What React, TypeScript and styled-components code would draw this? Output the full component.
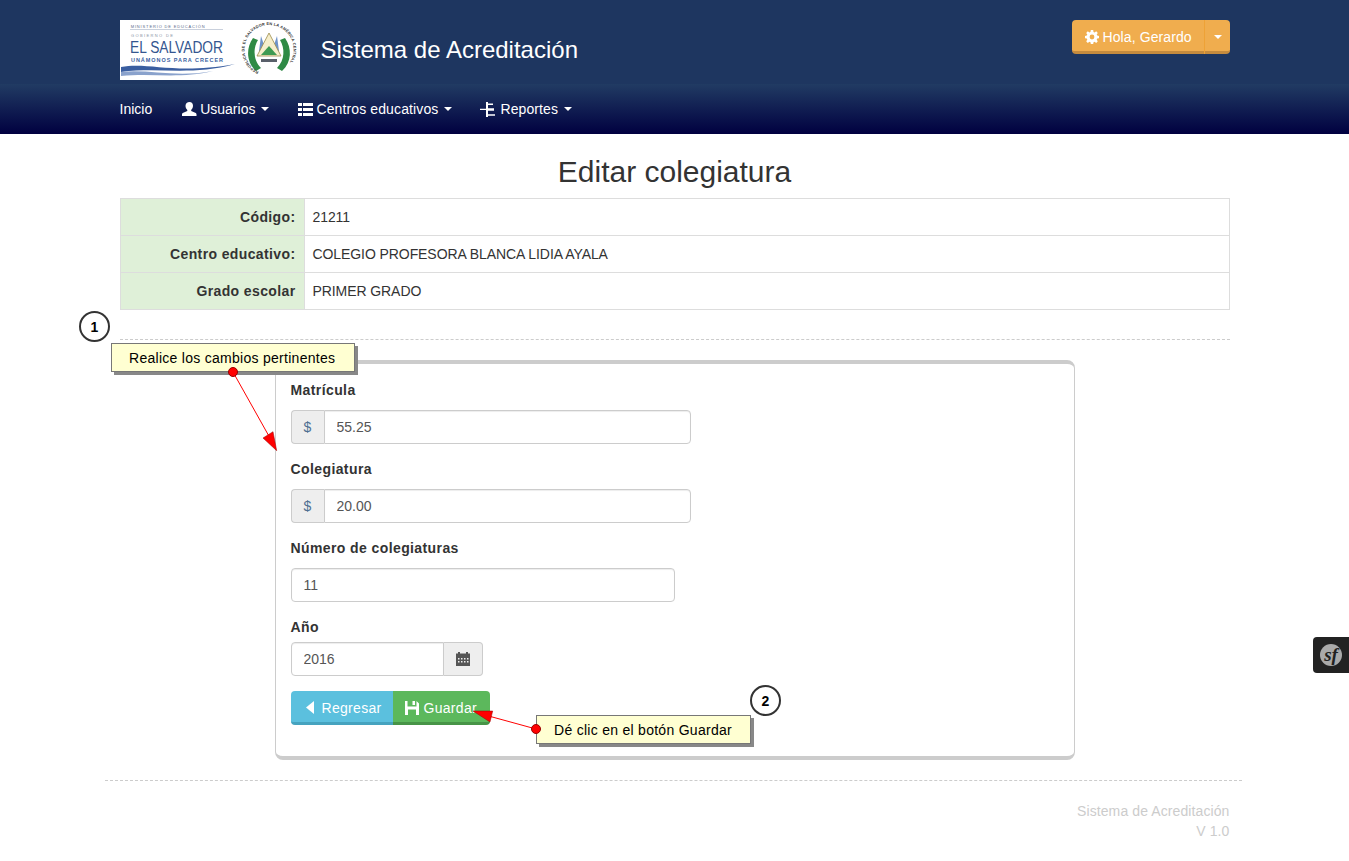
import React from 'react';
import styled, { createGlobalStyle } from 'styled-components';

const Global = createGlobalStyle`
  html, body { margin: 0; padding: 0; background: #fff; }
  body {
    font-family: "Liberation Sans", Arial, sans-serif;
    font-size: 14px;
    line-height: 20px;
    color: #333;
  }
  * { box-sizing: border-box; }
`;

const Page = styled.div`
  position: relative;
  width: 1349px;
  height: 861px;
  overflow: hidden;
`;

const Container = styled.div`
  width: 1140px;
  margin: 0 auto;
  padding: 0 15px;
  display: flex;
  align-items: center;
`;

const Top = styled.header`
  height: 84px;
  background: #1e3660;
`;

const TopRow = styled(Container)`
  height: 84px;
  padding-bottom: 8px;
  padding-top: 4px;
  justify-content: space-between;
  align-items: flex-start;
`;

const Brand = styled.div`
  display: flex;
  align-items: center;
  gap: 21px;
  padding-top: 16px;
`;

const Logo = styled.svg`
  display: block;
  width: 180px;
  height: 60px;
`;

const BrandName = styled.div`
  font-size: 24px;
  line-height: 60px;
  color: #fff;
`;

const UserGroup = styled.div`
  display: flex;
  margin-top: 16px;
  height: 34px;
  border-radius: 4px;
  background: #f0ad4e;
  border-bottom: 3px solid #c58b3e;
  color: #fff;
`;

const UserMain = styled.div`
  display: flex;
  align-items: center;
  gap: 4px;
  width: 133px;
  padding-left: 13px;
  letter-spacing: 0.1px;
  border-right: 1px solid #eea236;
  margin-bottom: -3px;
`;

const UserCaret = styled.div`
  width: 25px;
  padding-top: 3px;
  display: flex;
  align-items: center;
  justify-content: center;
`;

const Caret = styled.span`
  display: inline-block;
  width: 0;
  height: 0;
  margin-left: 2px;
  vertical-align: middle;
  border-top: 4px solid currentColor;
  border-left: 4px solid transparent;
  border-right: 4px solid transparent;
`;

const Nav = styled.nav`
  height: 50px;
  background: linear-gradient(to bottom, #213b63 0%, #000040 100%);
`;

const NavRow = styled(Container)`
  height: 50px;
  gap: 28px;
`;

const NavItem = styled.div<{ $tracking?: number; $nudge?: boolean }>`
  display: flex;
  align-items: center;
  gap: 4px;
  color: #fff;
  white-space: nowrap;
  letter-spacing: ${p => p.$tracking ?? 0}px;

  &:first-child {
    margin-right: 1px;
  }

  svg {
    margin: ${p => (p.$nudge ? '0 -1px 0 1px' : '0')};
  }
`;

const Main = styled(Container)`
  display: block;
`;

const Title = styled.h1`
  margin: 0;
  padding-top: 21px;
  font-size: 30px;
  line-height: 33px;
  font-weight: 400;
  text-align: center;
  color: #333;
  height: 64px;
`;

const InfoTable = styled.table`
  width: 100%;
  border-collapse: collapse;
`;

const HeadCell = styled.th`
  width: 184px;
  height: 37px;
  padding: 8px;
  text-align: right;
  background: #dff0d8;
  border: 1px solid #ddd;
  font-weight: 700;
  letter-spacing: 0.38px;
`;

const ValueCell = styled.td`
  padding: 8px;
  border: 1px solid #ddd;
  letter-spacing: -0.08px;
`;

const Dashed = styled.hr`
  margin: 29px 0 0;
  border: 0;
  border-top: 1px dashed #ccc;
`;

const Card = styled.section`
  width: 800px;
  height: 400px;
  margin: 20px 0 0 155px;
  padding: 16px 15px 0;
  background: #fff;
  border: 1px solid #ccc;
  border-top: 4px solid #ccc;
  border-bottom: 4px solid #ccc;
  border-radius: 8px;
`;

const Field = styled.div`
  margin-bottom: 15px;
`;

const Label = styled.label<{ $tight?: boolean }>`
  display: block;
  margin-bottom: ${p => (p.$tight ? 5 : 10)}px;
  font-weight: 700;
  height: 20px;
  letter-spacing: 0.4px;
`;

const InputRow = styled.div<{ $width: number }>`
  display: flex;
  width: ${p => p.$width}px;
  height: 34px;
`;

const Addon = styled.span`
  width: 33px;
  display: flex;
  align-items: center;
  justify-content: center;
  background: #eee;
  border: 1px solid #ccc;
  border-right: 0;
  border-radius: 4px 0 0 4px;
  color: #4d6f91;
`;

const ButtonAddon = styled.span`
  width: 39px;
  display: flex;
  align-items: center;
  justify-content: center;
  background: #eee;
  border: 1px solid #ccc;
  border-left: 0;
  border-radius: 0 4px 4px 0;
  color: #555;
`;

const Input = styled.input<{ $left?: boolean; $right?: boolean }>`
  flex: 1;
  min-width: 0;
  padding: 6px 12px;
  font: inherit;
  color: #555;
  background: #fff;
  border: 1px solid #ccc;
  border-radius: ${p => (p.$left ? '0 4px 4px 0' : p.$right ? '4px 0 0 4px' : '4px')};
  box-shadow: inset 0 1px 1px rgba(0, 0, 0, 0.075);
`;

const Buttons = styled.div`
  display: flex;
`;

const Btn = styled.div<{ $bg: string; $edge: string; $side: 'left' | 'right' }>`
  display: flex;
  align-items: center;
  height: 34px;
  gap: ${p => (p.$side === 'left' ? 7 : 5)}px;
  width: ${p => (p.$side === 'left' ? 102 : 97)}px;
  padding: 2px 0 0 ${p => (p.$side === 'left' ? 15 : 12)}px;
  color: #fff;
  letter-spacing: 0.3px;
  background: ${p => p.$bg};
  border-bottom: 3px solid ${p => p.$edge};
  border-radius: ${p => (p.$side === 'left' ? '4px 0 0 4px' : '0 4px 4px 0')};
`;

const FooterRule = styled.hr`
  width: 1137px;
  margin: 20px 0 0 -15px;
  border: 0;
  border-top: 1px dashed #ccc;
`;

const Footer = styled.footer`
  padding-top: 20px;
  text-align: right;
  color: #ccc;
  letter-spacing: 0.1px;
`;

const Callout = styled.div<{ $x: number; $y: number; $w: number }>`
  position: absolute;
  left: ${p => p.$x}px;
  top: ${p => p.$y}px;
  width: ${p => p.$w}px;
  height: 29px;
  padding-left: 17px;
  display: flex;
  align-items: center;
  background: #ffffd2;
  border: 1px solid #777;
  box-shadow: 3px 3px 0 #888;
  color: #000;
  letter-spacing: 0.28px;
  white-space: nowrap;
`;

const StepBadge = styled.div<{ $x: number; $y: number }>`
  position: absolute;
  left: ${p => p.$x}px;
  top: ${p => p.$y}px;
  width: 31px;
  height: 31px;
  display: flex;
  align-items: center;
  justify-content: center;
  background: #fff;
  border: 2px solid #333;
  border-radius: 50%;
  color: #000;
  font-size: 14px;
  font-weight: 700;
`;

const Overlay = styled.svg`
  position: absolute;
  left: 0;
  top: 0;
  width: 1349px;
  height: 861px;
  pointer-events: none;
`;

const SfTab = styled.div`
  position: absolute;
  right: 0;
  top: 637px;
  width: 36px;
  height: 36px;
  display: flex;
  align-items: center;
  justify-content: center;
  background: #222;
  border-radius: 4px 0 0 4px;
`;

const SfMark = styled.div`
  width: 22px;
  height: 22px;
  border-radius: 50%;
  background: #aaa;
  color: #222;
  font-family: "Liberation Serif", serif;
  font-style: italic;
  font-weight: 700;
  font-size: 19px;
  line-height: 21px;
  text-align: center;
`;

const GearIcon = () => (
  <svg width="14" height="14" viewBox="0 0 14 14" aria-hidden="true">
    <path
      fill="#fff"
      fillRule="evenodd"
      d="M5.800 0h2.400l.3 1.900 1.100.5L11.200 1.300l1.600 1.600-1.100 1.600.5 1.100 1.800.3v2.300l-1.800.4-.5 1.100 1.100 1.500-1.600 1.700-1.600-1.100-1.100.4-.3 1.900H5.800l-.3-1.900-1.100-.4-1.600 1.100-1.600-1.700 1.100-1.500-.5-1.100L0 8.200V5.900l1.800-.3.5-1.100-1.100-1.600 1.600-1.600 1.600 1.100 1.100-.5zM7 4.600a2.400 2.400 0 1 0 0 4.800 2.400 2.400 0 0 0 0-4.800z"
    />
  </svg>
);

const UserIcon = () => (
  <svg width="15" height="14" viewBox="0 0 15 14" aria-hidden="true">
    <path fill="#fff" d="M7.500 0C9.700 0 11 1.600 11 3.800c0 1.700-.8 3.300-1.800 4.100v1.100l4 1.700c1 .4 1.300 1 1.300 1.800V14H0v-1.500c0-.8.3-1.400 1.300-1.800l4-1.700V7.900C4.300 7.100 3.500 5.500 3.500 3.800 3.500 1.600 5.300 0 7.500 0z" />
  </svg>
);

const TableIcon = () => (
  <svg width="15" height="13" viewBox="0 0 15 13" aria-hidden="true">
    <path fill="#fff" d="M0 0h4v3H0zM5 0h10v3H5zM0 5h4v3H0zM5 5h10v3H5zM0 10h4v3H0zM5 10h10v3H5z" />
  </svg>
);

const TreeIcon = () => (
  <svg width="16" height="15" viewBox="0 0 16 15" aria-hidden="true">
    <path fill="#fff" d="M0 6.800h6V0h2v1.500h5V3H8v3.200h6v2.600H8v3.400h7v1.500H8V15H6V8H0z" />
  </svg>
);

const TriangleLeftIcon = () => (
  <svg width="9" height="13" viewBox="0 0 9 13" aria-hidden="true">
    <path fill="#fff" d="M8 0v13L0 6.500z" />
  </svg>
);

const FloppyIcon = () => (
  <svg width="14" height="14" viewBox="0 0 14 14" aria-hidden="true">
    <path fill="#fff" fillRule="evenodd" d="M0 0h2.500v5.500h9V0L14 2.500V14H0zM3 8.500V14h8V8.500zM7.500 0h2.500v4H7.500z" />
  </svg>
);

const CalendarIcon = () => (
  <svg width="14" height="14" viewBox="0 0 14 14" aria-hidden="true">
    <path fill="#555" fillRule="evenodd" d="M2 0h2v1.500h6V0h2v1.500h2V14H0V1.500h2zM2 6v1.500h1.500V6zM5 6v1.500h1.500V6zM8 6v1.500h1.500V6zM11 6v1.500h1.500V6zM2 9v1.500h1.500V9zM5 9v1.500h1.500V9zM8 9v1.500h1.500V9zM11 9v1.500h1.500V9z" />
  </svg>
);

const LogoArt = () => (
  <Logo viewBox="0 0 180 60" aria-label="Ministerio de Educación, Gobierno de El Salvador">
    <defs>
      <path id="seal-ring" d="M138.650 51.700A24.500 24.500 0 1 1 159.350 51.700" />
    </defs>
    <rect width="180" height="60" fill="#fff" />
    <text x="10.700" y="7.500" fontSize="4" fill="#5a6a8a" textLength="74" lengthAdjust="spacing">MINISTERIO DE EDUCACIÓN</text>
    <rect x="10" y="9" width="93" height="1" fill="#c9d0dc" />
    <text x="11" y="16.500" fontSize="4" fill="#8a93a5" textLength="42" lengthAdjust="spacing">GOBIERNO DE</text>
    <text x="10" y="33.300" fontSize="16" fill="#34568f" textLength="93" lengthAdjust="spacingAndGlyphs">EL SALVADOR</text>
    <text x="11" y="42" fontSize="5.500" fontWeight="700" fill="#3b5f9f" textLength="92" lengthAdjust="spacing">UNÁMONOS PARA CRECER</text>
    <path d="M1 47c28-5 55 8 114-3-42 12-76 3-114 8z" fill="#3a5ea0" />
    <path d="M1 52c28-3 55 6 92-1-32 8-60 2-92 5z" fill="#8aa2cc" />
    <path d="M133 18c-7 10-7 24 3 33l5-3c-8-8-8-20-3-28z" fill="#2f8a45" />
    <path d="M165 18c7 10 7 24-3 33l-5-3c8-8 8-20 3-28z" fill="#2f8a45" />
    <path d="M141 16l6 18-8-3zM157 16l-6 18 8-3z" fill="#6f93c9" />
    <path d="M149 13l12 23h-24z" fill="#f6eecb" stroke="#9c8b4a" strokeWidth=".8" />
    <path d="M141 35l8-9 8 9z" fill="#3f9a52" />
    <rect x="141" y="39" width="16" height="3" fill="#59606a" />
    <text fontSize="3.900" fontWeight="700" letterSpacing=".2" fill="#333">
      <textPath href="#seal-ring">REPÚBLICA DE EL SALVADOR EN LA AMÉRICA CENTRAL</textPath>
    </text>
  </Logo>
);

const App: React.FC = () => (
  <Page>
    <Global />
    <Top>
      <TopRow>
        <Brand>
          <LogoArt />
          <BrandName>Sistema de Acreditación</BrandName>
        </Brand>
        <UserGroup>
          <UserMain><GearIcon /> Hola, Gerardo</UserMain>
          <UserCaret><Caret /></UserCaret>
        </UserGroup>
      </TopRow>
    </Top>
    <Nav>
      <NavRow>
        <NavItem>Inicio</NavItem>
        <NavItem $nudge><UserIcon /> Usuarios <Caret /></NavItem>
        <NavItem $nudge $tracking={0.12}><TableIcon /> Centros educativos <Caret /></NavItem>
        <NavItem $tracking={0.1}><TreeIcon /> Reportes <Caret /></NavItem>
      </NavRow>
    </Nav>
    <Main>
      <Title>Editar colegiatura</Title>
      <InfoTable>
        <tbody>
          <tr><HeadCell>Código:</HeadCell><ValueCell>21211</ValueCell></tr>
          <tr><HeadCell>Centro educativo:</HeadCell><ValueCell>COLEGIO PROFESORA BLANCA LIDIA AYALA</ValueCell></tr>
          <tr><HeadCell>Grado escolar</HeadCell><ValueCell>PRIMER GRADO</ValueCell></tr>
        </tbody>
      </InfoTable>
      <Dashed />
      <Card>
        <Field>
          <Label>Matrícula</Label>
          <InputRow $width={400}><Addon>$</Addon><Input $left defaultValue="55.25" /></InputRow>
        </Field>
        <Field>
          <Label>Colegiatura</Label>
          <InputRow $width={400}><Addon>$</Addon><Input $left defaultValue="20.00" /></InputRow>
        </Field>
        <Field>
          <Label>Número de colegiaturas</Label>
          <InputRow $width={384}><Input defaultValue="11" /></InputRow>
        </Field>
        <Field>
          <Label $tight>Año</Label>
          <InputRow $width={192}><Input $right defaultValue="2016" /><ButtonAddon><CalendarIcon /></ButtonAddon></InputRow>
        </Field>
        <Buttons>
          <Btn $bg="#5bc0de" $edge="#46a3bf" $side="left"><TriangleLeftIcon /> Regresar</Btn>
          <Btn $bg="#5cb85c" $edge="#479447" $side="right"><FloppyIcon /> Guardar</Btn>
        </Buttons>
      </Card>
      <FooterRule />
      <Footer>Sistema de Acreditación<br />V 1.0</Footer>
    </Main>
    <Overlay viewBox="0 0 1349 861">
      <line x1="233" y1="372" x2="270" y2="438" stroke="#f00" />
      <path d="M263 438l10-6.300 3.700 19z" fill="#f00" stroke="#900" strokeWidth=".5" />
      <line x1="536" y1="729" x2="485" y2="715" stroke="#f00" />
      <path d="M473 711h19.700l-2.700 11z" fill="#f00" stroke="#900" strokeWidth=".5" />
    </Overlay>
    <StepBadge $x={79} $y={311}>1</StepBadge>
    <StepBadge $x={750} $y={685}>2</StepBadge>
    <Callout $x={111} $y={343} $w={244}>Realice los cambios pertinentes</Callout>
    <Callout $x={536} $y={715} $w={215}>Dé clic en el botón Guardar</Callout>
    <Overlay viewBox="0 0 1349 861">
      <circle cx="233" cy="372" r="4.500" fill="#f00" stroke="#900" />
      <circle cx="536" cy="729" r="4.500" fill="#f00" stroke="#900" />
    </Overlay>
    <SfTab><SfMark>sf</SfMark></SfTab>
  </Page>
);

export default App;
